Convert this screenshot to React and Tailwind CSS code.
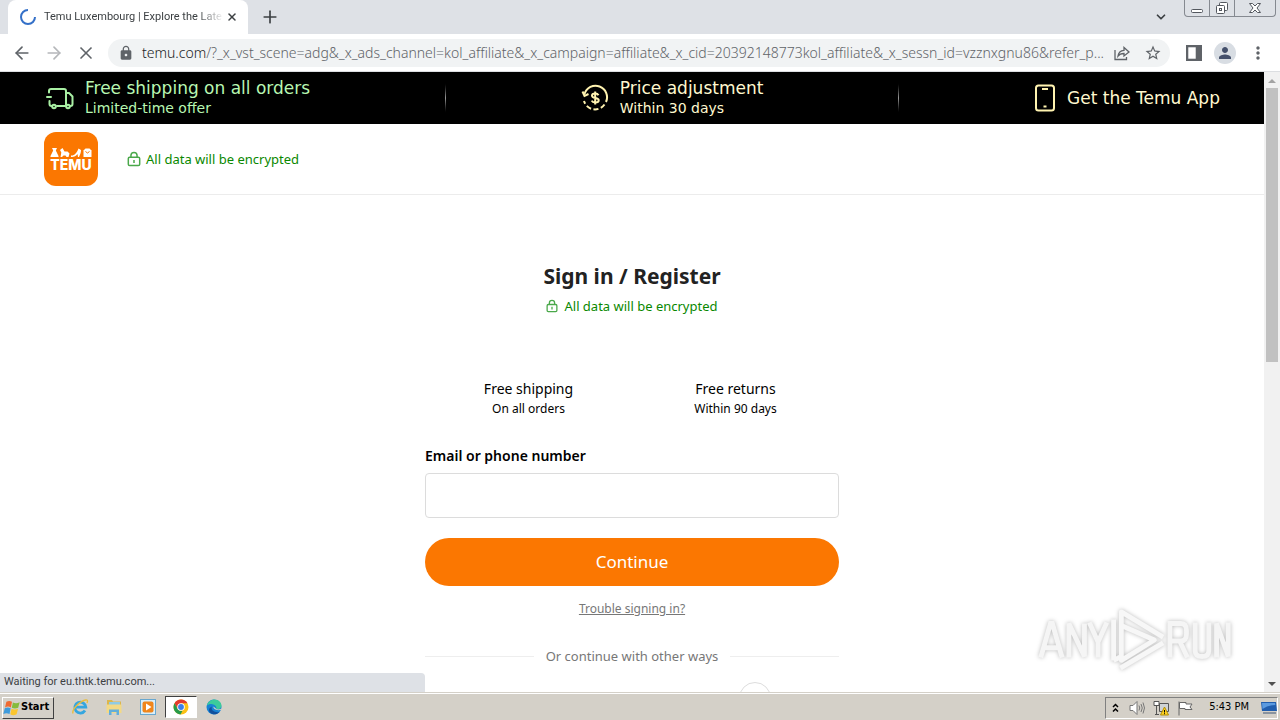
import { React } from "react";
import clsx from "clsx";
import {
  LuArrowLeft,
  LuArrowRight,
  LuChevronDown,
  LuPlus,
  LuX,
} from "react-icons/lu";
import { MdLock, MdMoreVert, MdPerson, MdStarBorder } from "react-icons/md";

const services = [
  { title: "Free shipping", text: "On all orders" },
  { title: "Free returns", text: "Within 90 days" },
];

function LockIcon({ className }) {
  return (
    <svg viewBox="0 0 16 18" className={className} fill="none" stroke="#4aa84a" strokeWidth="1.7">
      <rect x="1.5" y="7" width="13" height="9.5" rx="1.5" />
      <path d="M4.500 7V5a3.500 3.500 0 0 1 7 0v2M8 10v3.500" />
    </svg>
  );
}

function TruckIcon() {
  return (
    <svg viewBox="0 0 28 24" className="h-6 w-7" fill="none" stroke="#a9f0a4" strokeWidth="2" strokeLinecap="round" strokeLinejoin="round">
      <path d="M3 6.500V5A2 2 0 0 1 5 3h13a2 2 0 0 1 2 2v15h-9M1 11h4M3.500 15v3a2 2 0 0 0 2 2" />
      <path d="M20 7h3l3.500 3.500V18a2 2 0 0 1-2 2" />
      <circle cx="8" cy="20.500" r="1.800" />
      <circle cx="22" cy="20.500" r="1.800" />
    </svg>
  );
}

function PriceIcon() {
  return (
    <svg viewBox="0 0 28 28" className="size-7" fill="none" stroke="#fff3b0" strokeWidth="2">
      <path d="M3.500 10A11.500 11.500 0 1 1 25 18" />
      <path d="M23.500 20.500A11.500 11.500 0 0 1 3 17" strokeDasharray="5 2.500" />
      <path d="M1.500 7.500 3.500 12l4-2" />
      <path d="M17.500 11.300c-.6-1.200-1.800-1.800-3.300-1.800-2 0-3.200.8-3.200 2.200 0 3.200 6.700 1.300 6.700 4.500 0 1.500-1.500 2.300-3.500 2.300-1.800 0-3-.6-3.500-1.800M14.200 7.500v13" />
    </svg>
  );
}

function PhoneIcon() {
  return (
    <svg viewBox="0 0 22 28" className="h-7 w-[22px]" fill="none" stroke="#fff3b0" strokeWidth="2">
      <rect x="2" y="1.500" width="18" height="25" rx="2.500" />
      <path d="M8 5h6M9.500 22.500h3" />
    </svg>
  );
}

function TemuLogo() {
  return (
    <svg viewBox="0 0 54 54" className="size-[54px]" role="img" aria-label="Temu">
      <rect width="54" height="54" rx="12" fill="#fb7701" />
      <g fill="#fff">
        <path d="M8 16h5l-1.200 2.500L14.500 24v1h-8v-1l2.700-5.500z" />
        <path d="m16 18 2.500-2 2 3.500h3l2 2-1 3.500h-2l-1-1.500h-2L18 25h-1.500l.8-4.500z" />
        <path d="M27 23.500c3 .5 6-2.500 7.500-7l2.500 1.500c0 3-1 4.500-2 7h-1l-.5-3c-1.500 2-4 3.500-6.500 3z" />
        <path d="M39.500 25v-6.500l2-2h4l2 2V25z" />
      </g>
      <path d="M41.500 19.500q2 3 4 0" fill="none" stroke="#fb7701" />
      <text x="27" y="38" textAnchor="middle" fill="#fff" className="font-['Inter'] text-[14px] font-extrabold">
        TEMU
      </text>
    </svg>
  );
}

function TabStrip() {
  return (
    <div className="flex h-[34px] shrink-0 justify-between bg-[#dee1e6] pl-2 pr-1">
      <div className="flex">
        <div className="flex h-full w-[240px] items-center rounded-t-lg bg-white pl-3 pr-2 text-[#3c4043]">
          <svg viewBox="0 0 16 16" className="size-4 shrink-0" fill="none" stroke="#3470c8" strokeWidth="2">
            <path d="M8 1A7 7 0 1 0 15 8" />
          </svg>
          <p className="ml-2 min-w-0 flex-1 whitespace-nowrap font-['Roboto'] text-[11px] [mask-image:linear-gradient(to_right,black_85%,transparent)]">
            Temu Luxembourg | Explore the Late
          </p>
          <button aria-label="Close tab" className="p-0.5">
            <LuX className="size-3" strokeWidth="3" />
          </button>
        </div>
        <button aria-label="New tab" className="px-3 text-[#3c4043]">
          <LuPlus className="size-5" />
        </button>
      </div>
      <div className="flex items-start">
        <button aria-label="Search tabs" className="self-center px-4 text-[#3c4043]">
          <LuChevronDown className="size-[14px]" strokeWidth="3" />
        </button>
        <div className="flex h-[17px] rounded-b border border-t-0 border-[#858990] text-[#53575e]">
          <button aria-label="Minimize" className="flex w-6 items-center justify-center">
            <svg viewBox="0 0 12 12" className="size-3" fill="#fff" stroke="currentColor">
              <rect x=".5" y="7.500" width="11" height="3" rx="1" />
            </svg>
          </button>
          <button aria-label="Restore" className="flex w-[26px] items-center justify-center border-x border-[#858990]">
            <svg viewBox="0 0 14 14" className="size-[14px]" fill="#fff" stroke="currentColor">
              <rect x="4.500" y="1.500" width="8" height="8" rx="1" />
              <rect x="1.500" y="4.500" width="8" height="8" rx="1" />
              <rect x="4.500" y="7.500" width="2" height="2" />
            </svg>
          </button>
          <button aria-label="Close" className="flex w-10 items-center justify-center">
            <svg viewBox="0 0 12 12" className="size-3" fill="#fff" stroke="currentColor">
              <path d="M.5 1.500h3L6 4l2.500-2.500h3L8 6l3.500 4.500h-3L6 8l-2.500 2.500h-3L4 6z" />
            </svg>
          </button>
        </div>
      </div>
    </div>
  );
}

function Toolbar() {
  return (
    <div className="flex h-[38px] shrink-0 items-center border-b border-[#dcdee1] bg-white pl-3 pr-3 text-[#5f6368]">
      <button aria-label="Back">
        <LuArrowLeft className="size-5" />
      </button>
      <button aria-label="Forward" className="ml-3 text-[#b5b7ba]">
        <LuArrowRight className="size-5" />
      </button>
      <button aria-label="Stop" className="ml-3">
        <LuX className="size-5" />
      </button>
      <div className="ml-3 flex h-7 min-w-0 flex-1 items-center rounded-full bg-[#f1f3f4] pl-[10px] pr-2">
        <MdLock className="size-4 shrink-0" />
        <p className="ml-2 min-w-0 flex-1 whitespace-nowrap font-['Noto_Sans'] text-[14px] font-light">
          <span className="text-[#202124]">temu.com</span>
          /?_x_vst_scene=adg&_x_ads_channel=kol_affiliate&_x_campaign=affiliate&_x_cid=20392148773kol_affiliate&_x_sessn_id=vzznxgnu86&refer_p...
        </p>
        <button aria-label="Share" className="ml-3">
          <svg viewBox="0 0 16 16" className="size-4" fill="none" stroke="currentColor" strokeWidth="1.300">
            <path d="M1 5v9.500h11.500V12" />
            <path d="M4 11c.5-4 2.500-5.500 6-5.700V2.500L15 7l-5 4V8.500C7.500 8.500 5.500 9 4 11z" />
          </svg>
        </button>
        <button aria-label="Bookmark" className="ml-[14px]">
          <MdStarBorder className="size-[18px]" />
        </button>
      </div>
      <button aria-label="Side panel" className="ml-4">
        <svg viewBox="0 0 14 14" className="size-4">
          <rect x="1" y="1" width="12" height="12" fill="none" stroke="currentColor" strokeWidth="2" />
          <path d="M8.500 1H13v12H8.500z" fill="currentColor" />
        </svg>
      </button>
      <button aria-label="Profile" className="ml-3 flex size-[22px] items-center justify-center rounded-full bg-[#d8dde3] text-[#44506b]">
        <MdPerson className="size-[18px]" />
      </button>
      <button aria-label="Menu" className="ml-3">
        <MdMoreVert className="size-5" />
      </button>
    </div>
  );
}

function BannerItem({ icon, title, text, color }) {
  return (
    <div className={clsx("flex items-center gap-[11px] font-['DejaVu_Sans']", color)}>
      {icon}
      <div>
        <p className="text-[17px] leading-5">{title}</p>
        {text && <p className="text-[14px] leading-5">{text}</p>}
      </div>
    </div>
  );
}

function Banner() {
  const divider = <div className="h-8 w-px bg-linear-to-b from-black via-[#999] to-black" />;
  return (
    <div className="flex h-[52px] items-center justify-between bg-black pl-[46px] pr-11">
      <BannerItem icon={<TruckIcon />} title="Free shipping on all orders" text="Limited-time offer" color="text-[#b8f7b2]" />
      {divider}
      <BannerItem icon={<PriceIcon />} title="Price adjustment" text="Within 30 days" color="text-[#fff8cf]" />
      {divider}
      <BannerItem icon={<PhoneIcon />} title="Get the Temu App" color="text-[#fff8cf]" />
    </div>
  );
}

function SignIn() {
  return (
    <form className="mx-auto mt-[66px] flex w-[414px] flex-col items-center" onSubmit={(e) => e.preventDefault()}>
      <h1 className="text-[21px] font-bold leading-[30px] text-[#222]">Sign in / Register</h1>
      <p className="mt-[3px] flex items-center gap-[6px] text-[13px] leading-6 text-[#0a8800]">
        <LockIcon className="h-[14px] w-3" />
        All data will be encrypted
      </p>
      <div className="mt-[61px] grid w-full grid-cols-2 text-center text-black">
        {services.map((item) => (
          <div key={item.title}>
            <p className="text-[14px] leading-5">{item.title}</p>
            <p className="text-[12px] leading-5">{item.text}</p>
          </div>
        ))}
      </div>
      <label htmlFor="account" className="mt-[25px] self-start text-[14px] font-semibold leading-6 text-black">
        Email or phone number
      </label>
      <input id="account" type="text" className="mt-[5px] h-[45px] w-full rounded border border-[#dcdcdc] px-3 outline-none" />
      <button type="submit" className="mt-5 h-12 w-full rounded-full bg-[#fb7701] text-[17px] text-white">
        Continue
      </button>
      <a href="#trouble" className="mt-3 text-[12px] leading-[22px] text-[#777] underline">
        Trouble signing in?
      </a>
      <div className="mt-6 flex w-full items-center gap-3 text-[13px] leading-6 text-[#777]">
        <div className="h-px flex-1 bg-[#eee]" />
        Or continue with other ways
        <div className="h-px flex-1 bg-[#eee]" />
      </div>
      <button type="button" aria-label="More ways" className="ml-[246px] mt-[14px] size-8 shrink-0 rounded-full border border-[#ddd]" />
    </form>
  );
}

function Scrollbar() {
  return (
    <div className="flex w-4 shrink-0 flex-col items-center bg-[#f1f1f1]">
      <svg viewBox="0 0 16 16" className="size-4 shrink-0" fill="#a3a3a3">
        <path d="m4 11 4-4 4 4z" />
      </svg>
      <div className="h-[274px] w-3 bg-[#c1c1c1]" />
      <svg viewBox="0 0 16 16" className="mt-auto size-4 shrink-0" fill="#505050">
        <path d="m4 6 4 4 4-4z" />
      </svg>
    </div>
  );
}

function Watermark() {
  return (
    <svg viewBox="0 0 200 70" className="absolute bottom-[18px] right-[48px] h-[68px] w-[196px] drop-shadow-[0_0_2px_#bbb]" role="img" aria-label="ANY RUN">
      <g fill="none" stroke="#f5f5f5" strokeWidth="5">
        <path d="M4 53 14 18h2l10 35M8 43h14M33 53V18l16 34V18M54 17l9 20v16M63 37l9-20" />
        <path d="M137 53V18h11q6 0 6 7v4q0 7-6 7h-11M147 36l8 17M163 17v29q0 6 7 6t7-6V17M185 53V18l12 34V17" />
      </g>
      <g fill="none" stroke="#f7f7f7" strokeWidth="5" strokeLinejoin="round">
        <path d="M87 46V6l43 26M87 20v36l34-21zM79 14v42M79 56l8-4M86 64l44-26" />
      </g>
    </svg>
  );
}

function WindowsFlag() {
  return (
    <svg viewBox="0 0 16 16" className="size-[18px] shrink-0">
      <path d="M3 2.500Q5.500 1 8 2.500L7 7.500Q4.500 6 1.800 7.500z" fill="#ef6a32" />
      <path d="M8.800 3q2.800 1.500 6-.2l-1.300 5Q10.500 9 7.800 7.800z" fill="#86bb3b" />
      <path d="M1.600 8.300Q4.300 7 6.800 8.300l-1 5Q3 12 .3 13.300z" fill="#3e9bdc" />
      <path d="M7.600 8.600q2.700 1.300 5.800 0l-1.300 5q-3 1.500-5.600 0z" fill="#fbc62f" />
    </svg>
  );
}

function Taskbar() {
  return (
    <div className="flex h-7 shrink-0 items-center border-t border-[#d4d0c8] bg-[#d4d0c8] shadow-[inset_0_1px_#fff]">
      <button className="ml-0.5 mt-0.5 flex h-[22px] w-[52px] items-center border border-white border-b-[#404040] border-r-[#404040] font-['DejaVu_Sans_Condensed','DejaVu_Sans'] text-[11px] font-bold text-black">
        <WindowsFlag />
        Start
      </button>
      <div className="ml-[9px] flex items-center">
        <button aria-label="Internet Explorer" className="flex w-[34px] justify-center">
          <svg viewBox="0 0 18 18" className="size-[18px]" fill="none">
            <path d="M14 12.500a5.500 5.500 0 1 1 .8-3.300H5" stroke="#35a6df" strokeWidth="2.800" />
            <path d="M2 15.500C.5 12 8 3.500 14.500 2c2-.5 2.500.8 1.500 3" stroke="#e9bd3f" strokeWidth="1.400" />
          </svg>
        </button>
        <button aria-label="Explorer" className="flex w-[34px] justify-center">
          <svg viewBox="0 0 18 18" className="size-[18px]">
            <path d="M2 2h5l1 1.500h8V15H2z" fill="#dcb64c" />
            <path d="M4 4h11v4H4z" fill="#8fcbe5" />
            <path d="M1.500 6.500h15V15h-15z" fill="#f3d985" />
            <path d="M4 17v-5.500h10V17h-2.500v-3h-5v3z" fill="#62aeda" />
          </svg>
        </button>
        <button aria-label="Media Player" className="flex w-[34px] justify-center">
          <svg viewBox="0 0 16 16" className="size-4">
            <rect x=".5" y=".5" width="15" height="15" fill="#d9effa" stroke="#68a7cf" />
            <rect x="2.500" y="2.500" width="11" height="11" rx="2" fill="#f0861c" />
            <path d="m6 4.500 5.500 3.500L6 11.500z" fill="#fff" />
          </svg>
        </button>
        <button aria-label="Chrome" className="flex h-[22px] w-8 items-center justify-center border border-[#404040] border-b-white border-r-white bg-white">
          <svg viewBox="0 0 16 16" className="size-4">
            <circle cx="8" cy="8" r="7.500" fill="#fbc116" />
            <path d="M1.500 4.250A7.500 7.500 0 0 1 14.500 4.250H8L4.750 9.900z" fill="#e33b2e" />
            <path d="M1.500 4.250 4.750 9.900A3.750 3.750 0 0 0 8 11.750h1.500L7.500 15.500A7.500 7.500 0 0 1 1.500 4.250z" fill="#269a4a" />
            <circle cx="8" cy="8" r="3.800" fill="#fff" />
            <circle cx="8" cy="8" r="2.900" fill="#3c7fe8" />
          </svg>
        </button>
        <button aria-label="Edge" className="flex w-[34px] justify-center">
          <svg viewBox="0 0 16 16" className="size-4">
            <circle cx="8" cy="8" r="7.500" fill="#1782d4" />
            <path d="M.8 6.500C2 2.800 5 .5 8.500.5c4 0 7 3 7 6 0 2.500-2 4-4.500 3.800C9.500 10.200 11 9 10 7.500 8.500 4.500 3.500 4 .8 6.500z" fill="#3ccb9b" />
            <path d="M6 7.500c-1.500 3 1.500 6.500 7.500 5.500-3 3.500-7.500 2.500-9.500.5S3 8.500 6 7.500z" fill="#124f9c" />
            <path d="M7.500 7.500c-.5 2.500 3 4.500 8 3.300V9.500c-2 1.200-4.500 1-5 .5z" fill="#d4d0c8" />
          </svg>
        </button>
      </div>
      <div className="ml-auto mr-0.5 mt-0.5 flex h-[22px] items-center border border-[#808080] border-b-white border-r-white pl-1.5 text-black">
        <button aria-label="Show hidden icons">
          <svg viewBox="0 0 7 10" className="h-[10px] w-[7px]" fill="none" stroke="#000" strokeWidth="1.500">
            <path d="m1 4 2.500-2.500L6 4M1 8.500 3.500 6 6 8.500" />
          </svg>
        </button>
        <svg viewBox="0 0 16 16" className="ml-2.5 size-4" fill="#fff" stroke="#777">
          <path d="M1 5.500h3l4-4v13l-4-4H1z" />
          <path d="M10 5.500q1.500 2.500 0 5M12 4q2.500 4 0 8M14 2.500q3 5.500 0 11" fill="none" />
        </svg>
        <svg viewBox="0 0 16 16" className="ml-2 size-4" fill="#fff" stroke="#555">
          <path d="M6.500 3.500h9v8h-9z" fill="#cfd3d5" />
          <path d="M1 1.500h5v4H1zM3.500 5.500v9M2 14.500h4" />
          <path d="m11.500 7 4 8h-8z" fill="#ffd321" stroke="#b38d00" />
          <path d="M11.500 10v2.500M11.500 13.200v1" stroke="#000" />
        </svg>
        <svg viewBox="0 0 16 16" className="ml-2 size-4" fill="#fff" stroke="#666">
          <path d="M2 1.500v14M2.500 2.500H9v1.500h6l-2 3 2 2.500H8V8.500H2.500z" />
        </svg>
        <p className="ml-4 font-['DejaVu_Sans_Condensed','DejaVu_Sans'] text-[11px]">5:43 PM</p>
        <svg viewBox="0 0 16 14" className="ml-3 h-[14px] w-4">
          <path d="M0 1h15l1 9H1z" fill="#215eae" />
          <path d="M1 2h13l.3 2Q7 4 1.500 8z" fill="#5c9be0" />
          <path d="M2 11h13v2H2z" fill="#89939f" />
        </svg>
      </div>
    </div>
  );
}

function App() {
  return (
    <div className="flex h-screen flex-col overflow-hidden bg-white font-['Noto_Sans','Open_Sans',sans-serif]">
      <TabStrip />
      <Toolbar />
      <div className="relative flex min-h-0 flex-1">
        <main className="min-w-0 flex-1 overflow-hidden">
          <Banner />
          <header className="flex h-[71px] items-center border-b border-[#ececec] pl-11">
            <a href="#home">
              <TemuLogo />
            </a>
            <p className="ml-[29px] flex items-center gap-[5px] text-[13px] leading-6 text-[#0a8800]">
              <LockIcon className="h-4 w-[14px]" />
              All data will be encrypted
            </p>
          </header>
          <SignIn />
        </main>
        <Scrollbar />
        <div className="absolute bottom-0 left-0 flex h-[19px] w-[425px] items-center rounded-tr bg-[#dee1e6] pl-1 font-['Roboto'] text-[11px] text-[#3c4043]">
          Waiting for eu.thtk.temu.com...
        </div>
        <Watermark />
      </div>
      <Taskbar />
    </div>
  );
}

export default App;
